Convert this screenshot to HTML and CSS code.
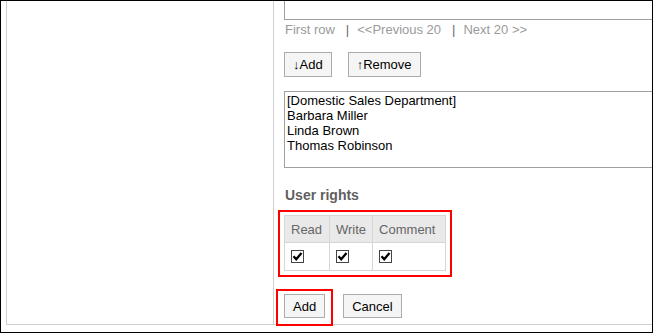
FILE: index.html
```html
<!DOCTYPE html>
<html>
<head>
<meta charset="utf-8">
<link rel="stylesheet" href="styles.css">
</head>
<body>
<div class="frame">
  <div class="panel">
    <div class="side"></div>
    <div class="main">
      <div class="topbox"></div>
      <div class="pager">
        <span class="plink">First row</span><span class="pipe">|</span><span class="plink">&lt;&lt;Previous 20</span><span class="pipe">|</span><span class="plink">Next 20 &gt;&gt;</span>
      </div>
      <div class="btnrow top-btns">
        <button class="btn btn-lg">↓Add</button>
        <button class="btn btn-lg">↑Remove</button>
      </div>
      <div class="listbox">
        <div>[Domestic Sales Department]</div>
        <div>Barbara Miller</div>
        <div>Linda Brown</div>
        <div>Thomas Robinson</div>
      </div>
      <div class="section-title">User rights</div>
      <div class="rights-wrap mark">
        <table class="rights">
          <tr><th>Read</th><th>Write</th><th>Comment</th></tr>
          <tr>
            <td><span class="cb"><svg width="13" height="13" viewBox="0 0 13 13"><rect x="0.5" y="0.5" width="12" height="12" fill="#fff" stroke="#444"/><path d="M2.5 6.3 L5.2 9.3 L10.5 3" fill="none" stroke="#000" stroke-width="2.3"/></svg></span></td>
            <td><span class="cb"><svg width="13" height="13" viewBox="0 0 13 13"><rect x="0.5" y="0.5" width="12" height="12" fill="#fff" stroke="#444"/><path d="M2.5 6.3 L5.2 9.3 L10.5 3" fill="none" stroke="#000" stroke-width="2.3"/></svg></span></td>
            <td><span class="cb"><svg width="13" height="13" viewBox="0 0 13 13"><rect x="0.5" y="0.5" width="12" height="12" fill="#fff" stroke="#444"/><path d="M2.5 6.3 L5.2 9.3 L10.5 3" fill="none" stroke="#000" stroke-width="2.3"/></svg></span></td>
          </tr>
        </table>
      </div>
      <div class="btnrow bottom-btns">
        <span class="add-wrap mark"><button class="btn btn-sm">Add</button></span>
        <button class="btn btn-sm">Cancel</button>
      </div>
    </div>
  </div>
</div>
</body>
</html>
```

FILE: styles.css
```css
html, body {
  margin: 0;
  padding: 0;
  background: #fff;
}

.frame {
  width: 653px;
  height: 333px;
  box-sizing: border-box;
  border: 1px solid #000;
  overflow: hidden;
  font-family: "Liberation Sans", Arial, sans-serif;
  font-size: 13px;
  color: #000;
}

.panel {
  display: flex;
  margin-left: 5px;
  height: 324px;
  box-sizing: border-box;
  border-left: 1px solid #cfcfcf;
  border-bottom: 1px solid #cfcfcf;
}

.side {
  width: 266px;
  flex: none;
  border-right: 1px solid #cfcfcf;
}

.main {
  flex: none;
  width: 420px;
  padding-left: 10px;
  display: flex;
  flex-direction: column;
  align-items: flex-start;
}

.topbox {
  width: 400px;
  height: 60px;
  margin-top: -41px;
  box-sizing: border-box;
  border: 1px solid #a0a0a0;
  flex: none;
}

.pager {
  margin-top: 2px;
  line-height: 15px;
  color: #9a9a9a;
  display: flex;
  margin-left: 1px;
}

.pipe {
  color: #6a6a6a;
  margin: 0 8px 0 11px;
}

.btnrow {
  display: flex;
  align-items: flex-start;
}

.top-btns {
  margin-top: 15px;
  gap: 16px;
}

.btn {
  font-family: "Liberation Sans", Arial, sans-serif;
  font-size: 13px;
  color: #000;
  background: #f5f5f5;
  border: 1px solid #ababab;
  border-radius: 0;
  height: 25px;
  padding: 0 7px;
  margin: 0;
  line-height: 15px;
}

.btn-lg {
  padding: 0 8px;
}

.btn-sm {
  height: 24px;
  padding: 0 8px;
}

.listbox {
  margin-top: 14px;
  width: 400px;
  height: 77px;
  box-sizing: border-box;
  border: 1px solid #a0a0a0;
  padding: 1px 2px;
  line-height: 15px;
  flex: none;
}

.section-title {
  margin-top: 19px;
  margin-left: 1px;
  font-size: 14px;
  font-weight: bold;
  color: #5f5f5f;
  line-height: 16px;
}

.rights-wrap {
  margin-top: 12px;
  display: inline-block;
}

.mark {
  position: relative;
}

.rights-wrap::after {
  content: "";
  position: absolute;
  left: -6px;
  right: -6px;
  top: -5px;
  bottom: -6px;
  border: 2px solid #f00;
}

.rights {
  border-collapse: collapse;
}

.rights th,
.rights td {
  border: 1px solid #d6d6d6;
  padding: 0 6px;
  text-align: left;
}

.rights th {
  background: #e9e9e9;
  color: #666;
  font-weight: normal;
  height: 26px;
  line-height: 15px;
}

.rights th:nth-child(1) { width: 32px; }
.rights th:nth-child(2) { width: 29px; }
.rights th:nth-child(3) { width: 60px; }

.rights td {
  height: 27px;
  padding-left: 6px;
}

.cb {
  display: block;
  width: 13px;
  height: 13px;
}

.cb svg {
  display: block;
}

.bottom-btns {
  margin-top: 23px;
  gap: 18px;
}

.add-wrap {
  display: inline-block;
}

.add-wrap .btn {
  display: block;
}

.add-wrap::after {
  content: "";
  position: absolute;
  left: -8px;
  right: -8px;
  top: -5px;
  bottom: -8px;
  border: 2px solid #f00;
}
```
